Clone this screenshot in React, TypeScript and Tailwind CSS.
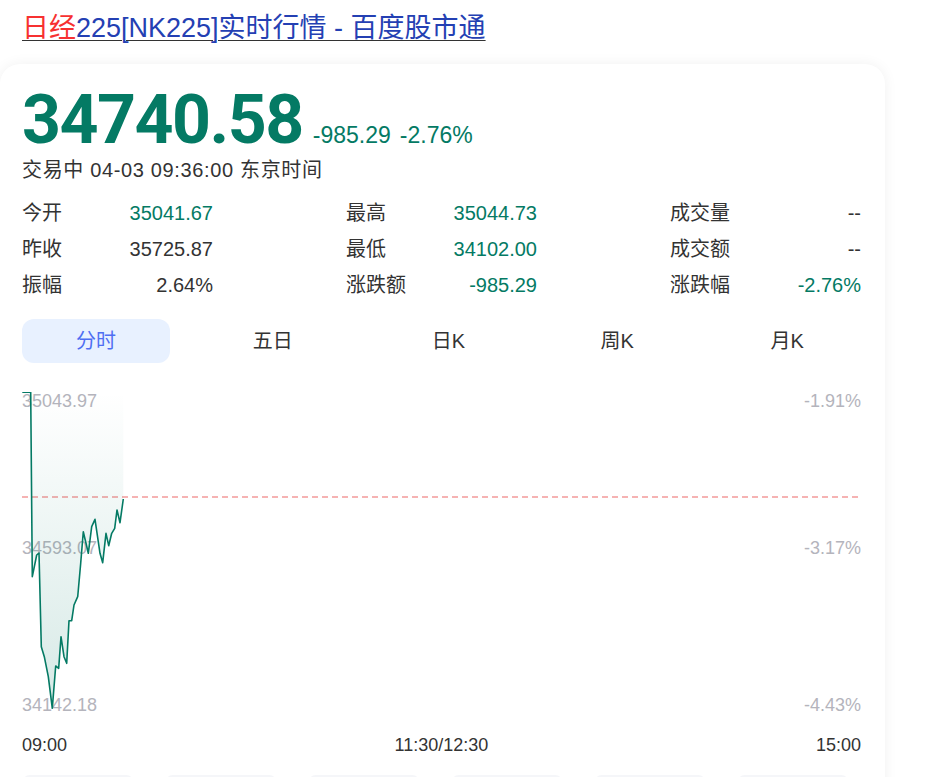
import React from 'react'

const GREEN = '#047a64'

const STATS = [
  [
    { label: '今开', value: '35041.67', tone: 'green' },
    { label: '最高', value: '35044.73', tone: 'green' },
    { label: '成交量', value: '--', tone: 'dark' },
  ],
  [
    { label: '昨收', value: '35725.87', tone: 'dark' },
    { label: '最低', value: '34102.00', tone: 'green' },
    { label: '成交额', value: '--', tone: 'dark' },
  ],
  [
    { label: '振幅', value: '2.64%', tone: 'dark' },
    { label: '涨跌额', value: '-985.29', tone: 'green' },
    { label: '涨跌幅', value: '-2.76%', tone: 'green' },
  ],
]

const TABS = [
  { name: '分时', cls: 'ml-0' },
  { name: '五日', cls: 'ml-[29px]' },
  { name: '日K', cls: 'ml-[28px]' },
  { name: '周K', cls: 'ml-[21px]' },
  { name: '月K', cls: 'ml-[22px]' },
]

// traced intraday points, page coords (chart origin at 22,392)
const RAW: [number, number][] = [
  [22.3, 392.3], [30.7, 392.3], [32.3, 576.7], [36.7, 555], [39, 553],
  [41.3, 646.7], [44.3, 656.7], [48.3, 676.7], [52.3, 708.3], [55.7, 666],
  [58.7, 668.3], [61, 636.7], [64, 656.7], [66.7, 663.3], [69, 620.7],
  [71.7, 620.7], [74, 605], [77.7, 596.7], [80.7, 563.3], [83.3, 531.7],
  [86, 543.3], [88.3, 553.3], [91.7, 526.7], [95, 519.3], [100, 553.3],
  [102.7, 562.7], [106, 533.3], [108.7, 545.7], [111.7, 533.3], [114.7, 528.3],
  [117, 510], [120, 522.7], [123.3, 499],
]

const PTS = RAW.map(([x, y]) => [x - 22, y - 392] as [number, number])
const LINE = PTS.map(([x, y]) => `${x.toFixed(1)},${y.toFixed(1)}`).join(' ')
const AREA = `${LINE} ${PTS[PTS.length - 1][0].toFixed(1)},0 0,0`

function Chart() {
  return (
    <div className="relative mt-[29px] h-[322px]">
      <div className="absolute inset-0 text-[18px] leading-[18px] text-[#b4b4bc]">
        <span className="absolute left-0 top-0">35043.97</span>
        <span className="absolute left-0 top-[147px]">34593.07</span>
        <span className="absolute left-0 top-[304px]">34142.18</span>
        <span className="absolute right-0 top-0">-1.91%</span>
        <span className="absolute right-0 top-[147px]">-3.17%</span>
        <span className="absolute right-0 top-[304px]">-4.43%</span>
      </div>
      <svg className="absolute inset-0" width="840" height="322" viewBox="0 0 840 322">
        <defs>
          <linearGradient id="fill" x1="0" y1="0" x2="0" y2="1">
            <stop offset="0%" stopColor={GREEN} stopOpacity="0" />
            <stop offset="100%" stopColor={GREEN} stopOpacity="0.16" />
          </linearGradient>
        </defs>
        <line x1="0" y1="105" x2="840" y2="105" stroke="#f39a9a" strokeWidth="1.3" strokeDasharray="6 4" />
        <polygon points={AREA} fill="url(#fill)" />
        <polyline points={LINE} fill="none" stroke={GREEN} strokeWidth="1.6" strokeLinejoin="round" />
      </svg>
    </div>
  )
}

export default function App() {
  return (
    <div
      className="min-h-[777px] bg-white text-[#333]"
      style={{ fontFamily: '"Liberation Sans", Arial, "Noto Sans CJK SC", sans-serif' }}
    >
      <div className="pl-[22px] pt-[12px] text-[27px] leading-[32px]">
        <a className="underline decoration-1 underline-offset-[3px]" href="#">
          <span className="text-[#f73131]">日经</span>
          <span className="text-[#2440b3]">225[NK225]实时行情 - 百度股市通</span>
        </a>
      </div>

      <div className="mt-[20px] w-[885px] rounded-[20px] bg-white pl-[22px] pr-[24px] pt-[24px] shadow-[0_0_14px_rgba(0,0,0,0.06)]">
        <div className="flex items-baseline">
          <span
            className="text-[68px] font-bold leading-[64px] tracking-[-1.5px] text-[#047a64]"
            style={{ fontFamily: 'Roboto, "DejaVu Sans", sans-serif' }}
          >
            34740.58
          </span>
          <span className="ml-[10px] text-[23px] leading-[24px] text-[#047a64]">-985.29</span>
          <span className="ml-[9px] text-[23px] leading-[24px] text-[#047a64]">-2.76%</span>
        </div>
        <div className="mt-[6px] text-[20px] leading-[24px] tracking-[0.65px]">交易中 04-03 09:36:00 东京时间</div>

        <div className="mt-[13px] grid grid-cols-[191px_191px_191px] gap-x-[133px] text-[20px] leading-[36px]">
          {STATS.flat().map((s) => (
            <div key={s.label} className="flex justify-between">
              <span>{s.label}</span>
              <span className={s.tone === 'green' ? 'text-[#047a64]' : 'text-[#333]'}>{s.value}</span>
            </div>
          ))}
        </div>

        <div className="mt-[16px] flex">
          {TABS.map((t, i) => (
            <div
              key={t.name}
              className={`flex h-[44px] w-[150px] items-center justify-center rounded-[12px] text-[20px] ${t.cls} ${
                i === 0 ? 'bg-[#e8f1ff] text-[#4e6ef2]' : 'text-[#333]'
              }`}
            >
              {t.name}
            </div>
          ))}
        </div>

        <Chart />

        <div className="mt-[19px] flex justify-between text-[18px] leading-[24px] text-[#333]">
          <span>09:00</span>
          <span>11:30/12:30</span>
          <span>15:00</span>
        </div>

        <div className="mt-[18px] flex gap-[31px] pb-[10px]">
          {[0, 1, 2, 3, 4, 5].map((i) => (
            <div key={i} className="h-[40px] w-[112px] rounded-[8px] bg-[#f5f6f9]" />
          ))}
        </div>
      </div>
    </div>
  )
}
